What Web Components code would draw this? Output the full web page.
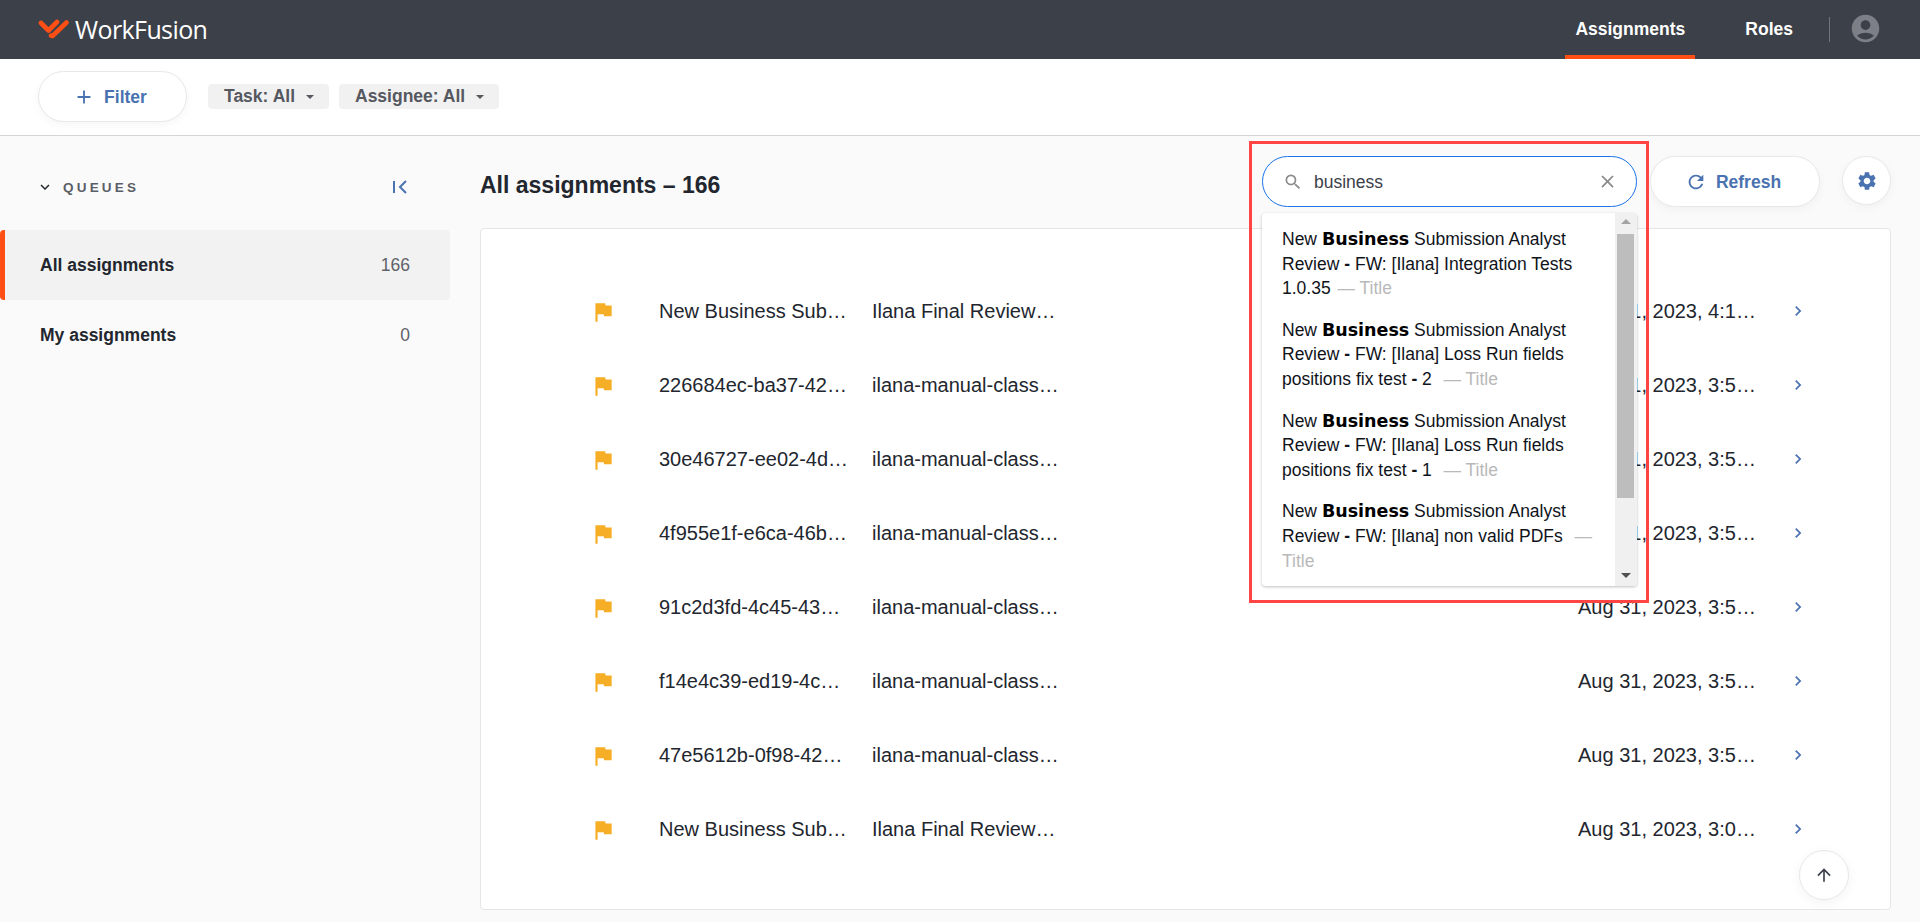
<!DOCTYPE html>
<html lang="en">
<head>
<meta charset="utf-8">
<title>WorkFusion</title>
<style>
    html, body { margin: 0; height: 100%; }
    body {
        display: flex;
        flex-direction: column;
        height: 922px;
        overflow: hidden;
        background: #fafafa;
        color: #22262e;
        font-family: "Liberation Sans", Arial, sans-serif;
    }
    .content { display: flex; flex: 1; min-height: 0; }
</style>
</head>
<body>
<wf-header></wf-header>
<wf-filter-bar></wf-filter-bar>
<div class="content">
    <wf-sidebar>
        <wf-queue-item label="All assignments" count="166" active></wf-queue-item>
        <wf-queue-item label="My assignments" count="0"></wf-queue-item>
    </wf-sidebar>
    <wf-main>
        <wf-row name="New Business Sub…" task="Ilana Final Review…" date="Aug 31, 2023, 4:1…"></wf-row>
        <wf-row name="226684ec-ba37-42…" task="ilana-manual-class…" date="Aug 31, 2023, 3:5…"></wf-row>
        <wf-row name="30e46727-ee02-4d…" task="ilana-manual-class…" date="Aug 31, 2023, 3:5…"></wf-row>
        <wf-row name="4f955e1f-e6ca-46b…" task="ilana-manual-class…" date="Aug 31, 2023, 3:5…"></wf-row>
        <wf-row name="91c2d3fd-4c45-43…" task="ilana-manual-class…" date="Aug 31, 2023, 3:5…"></wf-row>
        <wf-row name="f14e4c39-ed19-4c…" task="ilana-manual-class…" date="Aug 31, 2023, 3:5…"></wf-row>
        <wf-row name="47e5612b-0f98-42…" task="ilana-manual-class…" date="Aug 31, 2023, 3:5…"></wf-row>
        <wf-row name="New Business Sub…" task="Ilana Final Review…" date="Aug 31, 2023, 3:0…"></wf-row>
    </wf-main>
</div>

<script>
const ICONS = {
    search: 'M15.5 14h-.79l-.28-.27A6.471 6.471 0 0 0 16 9.5 6.5 6.5 0 1 0 9.5 16c1.61 0 3.09-.59 4.23-1.57l.27.28v.79l5 4.99L20.49 19l-4.99-5zm-6 0C7.01 14 5 11.99 5 9.5S7.01 5 9.5 5 14 7.01 14 9.5 11.99 14 9.5 14z',
    close: 'M19 6.41 17.59 5 12 10.59 6.41 5 5 6.41 10.59 12 5 17.59 6.41 19 12 13.41 17.59 19 19 17.59 13.41 12z',
    refresh: 'M17.65 6.35A7.958 7.958 0 0 0 12 4c-4.42 0-7.99 3.58-7.99 8s3.57 8 7.99 8c3.73 0 6.84-2.55 7.73-6h-2.08A5.99 5.99 0 0 1 12 18c-3.31 0-6-2.69-6-6s2.69-6 6-6c1.66 0 3.14.69 4.22 1.78L13 11h7V4l-2.35 2.35z',
    settings: 'M19.14 12.94c.04-.3.06-.61.06-.94 0-.32-.02-.64-.07-.94l2.03-1.58a.49.49 0 0 0 .12-.61l-1.92-3.32a.488.488 0 0 0-.59-.22l-2.39.96c-.5-.38-1.03-.7-1.62-.94l-.36-2.54a.484.484 0 0 0-.48-.41h-3.84c-.24 0-.43.17-.47.41l-.36 2.54c-.59.24-1.13.57-1.62.94l-2.39-.96c-.22-.08-.47 0-.59.22L2.74 8.87c-.12.21-.08.47.12.61l2.03 1.58c-.05.3-.09.63-.09.94s.02.64.07.94l-2.03 1.58a.49.49 0 0 0-.12.61l1.92 3.32c.12.22.37.29.59.22l2.39-.96c.5.38 1.03.7 1.62.94l.36 2.54c.05.24.24.41.48.41h3.84c.24 0 .44-.17.47-.41l.36-2.54c.59-.24 1.13-.56 1.62-.94l2.39.96c.22.08.47 0 .59-.22l1.92-3.32c.12-.22.07-.47-.12-.61l-2.01-1.58zM12 15.6c-1.98 0-3.6-1.62-3.6-3.6s1.62-3.6 3.6-3.6 3.6 1.62 3.6 3.6-1.62 3.6-3.6 3.6z',
    account: 'M12 2C6.48 2 2 6.48 2 12s4.48 10 10 10 10-4.48 10-10S17.52 2 12 2zm0 4c1.93 0 3.5 1.57 3.5 3.5S13.93 13 12 13s-3.5-1.57-3.5-3.5S10.07 6 12 6zm0 14c-2.03 0-4.43-.82-6.14-2.88C7.55 15.8 9.68 15 12 15s4.45.8 6.14 2.12C16.43 19.18 14.03 20 12 20z',
    up: 'M4 12l1.41 1.41L11 7.83V20h2V7.83l5.58 5.59L20 12l-8-8-8 8z',
    flag: 'M14.4 6 14 4H5v17h2v-7h5.6l.4 2h7V6z',
    add: 'M19 13h-6v6h-2v-6H5v-2h6V5h2v6h6v2z',
    chevron: 'M10 6 8.59 7.41 13.17 12l-4.58 4.59L10 18l6-6z',
    down: 'M16.59 8.59 12 13.17 7.41 8.59 6 10l6 6 6-6z'
};

function icon(name, size, color) {
    return `<svg width="${size}" height="${size}" viewBox="0 0 24 24" fill="${color}" style="display:block;flex:none"><path d="${ICONS[name]}"/></svg>`;
}

class WfElement extends HTMLElement {
    constructor() {
        super();
        this.attachShadow({mode: 'open'});
    }
    render(html) {
        this.shadowRoot.innerHTML = html;
    }
}

class WfHeader extends WfElement {
    connectedCallback() {
        this.render(`
        <style>
            :host {
                display: flex;
                align-items: stretch;
                flex: none;
                height: 59px;
                background: #3c4049;
                color: #fff;
                font: bold 17.5px "Liberation Sans", Arial, sans-serif;
            }
            .logo { display: flex; align-items: center; padding: 0 0 2px 38px; flex: 1; }
            .logo span { font: 400 25px "Open Sans", sans-serif; letter-spacing: -.6px; margin-left: 6px; }
            nav { display: flex; }
            a { display: flex; align-items: center; box-sizing: border-box; }
            a.on { width: 130px; justify-content: center; border-bottom: 4px solid #ff4f14; padding-top: 4px; margin-right: 50px; }
            .sep { width: 1px; height: 25px; background: #72757c; margin: 17px 19px 0 36px; }
            .me { margin: 12px 38px 0 0; }
        </style>
        <div class="logo">
            <svg width="31" height="20" viewBox="0 0 31 20" fill="none" stroke="#ff4f14" stroke-width="4.6" stroke-linecap="round" stroke-linejoin="round">
                <path d="M3 4 L10.5 11.5 L19 3"/><path d="M13 16.5 L14.5 17 L28.5 3.5"/>
            </svg>
            <span>WorkFusion</span>
        </div>
        <nav>
            <a class="on">Assignments</a>
            <a>Roles</a>
            <div class="sep"></div>
            <div class="me">${icon('account', 33, '#7c7f85')}</div>
        </nav>`);
    }
}

class WfChip extends WfElement {
    connectedCallback() {
        this.render(`
        <style>
            :host {
                display: inline-flex;
                align-items: center;
                height: 25px;
                padding: 0 15px 0 16px;
                gap: 11px;
                border-radius: 4px;
                background: #f1f1f2;
                color: #55585f;
                font: bold 17.5px "Liberation Sans", Arial, sans-serif;
            }
            i { width: 0; height: 0; border: 4px solid transparent; border-top: 4px solid #55585f; border-bottom: 0; }
        </style>
        <slot></slot><i></i>`);
    }
}

class WfPill extends WfElement {
    connectedCallback() {
        const name = this.getAttribute('icon'), size = this.getAttribute('size') || 22;
        this.render(`
        <style>
            :host {
                display: inline-flex;
                align-items: center;
                justify-content: center;
                flex: none;
                box-sizing: border-box;
                height: 51px;
                gap: 9px;
                border: 1px solid #e8e8e8;
                border-radius: 26px;
                background: #fff;
                box-shadow: 0 3px 10px rgba(0, 0, 0, .04);
                color: #4a72b0;
                font: bold 17.5px "Liberation Sans", Arial, sans-serif;
            }
        </style>
        ${icon(name, size, '#4a72b0')}<slot></slot>`);
    }
}

class WfFilterBar extends WfElement {
    connectedCallback() {
        this.render(`
        <style>
            :host {
                display: flex;
                align-items: center;
                flex: none;
                box-sizing: border-box;
                height: 77px;
                padding: 0 0 1px 38px;
                background: #fff;
                border-bottom: 1px solid #d5d5d5;
            }
            wf-pill { width: 149px; margin-right: 21px; padding: 1px 5px 0 0; }
            wf-chip { margin-right: 10px; }
        </style>
        <wf-pill icon="add">Filter</wf-pill>
        <wf-chip>Task: All</wf-chip>
        <wf-chip>Assignee: All</wf-chip>`);
    }
}

class WfSidebar extends WfElement {
    connectedCallback() {
        this.render(`
        <style>
            :host { display: block; flex: none; width: 450px; }
            .head {
                display: flex;
                align-items: center;
                box-sizing: border-box;
                height: 94px;
                padding: 8px 42px 0 36px;
            }
            .head span {
                flex: 1;
                margin-left: 9px;
                color: #5a5e66;
                font: bold 13.5px "Liberation Sans", Arial, sans-serif;
                letter-spacing: 3.2px;
            }
        </style>
        <div class="head">
            ${icon('down', 18, '#22262e')}
            <span>QUEUES</span>
            <svg width="16" height="16" viewBox="0 0 16 16" fill="none" stroke="#4a72b0" stroke-width="2"><path d="M2 2v12M14 2 8 8l6 6"/></svg>
        </div>
        <slot></slot>`);
    }
}

class WfQueueItem extends WfElement {
    connectedCallback() {
        this.render(`
        <style>
            :host {
                display: flex;
                align-items: center;
                box-sizing: border-box;
                height: 70px;
                padding: 0 40px;
                color: #22262e;
                font: bold 17.5px "Liberation Sans", Arial, sans-serif;
            }
            :host([active]) {
                background: #f2f2f2;
                border-left: 5px solid #ff4f14;
                border-radius: 4px;
                padding-left: 35px;
            }
            b { flex: 1; }
            span { color: #5f6269; font-weight: 400; }
        </style>
        <b>${this.getAttribute('label')}</b><span>${this.getAttribute('count')}</span>`);
    }
}

class WfSearch extends WfElement {
    connectedCallback() {
        const results = [
            ['Integration Tests', '1.0.35', ' '],
            ['Loss Run fields', 'positions fix test <b>-</b> 2', '&nbsp; '],
            ['Loss Run fields', 'positions fix test <b>-</b> 1', '&nbsp; '],
            ['non valid PDFs', '', '&nbsp; ']
        ];
        const items = results.map(([a, b, gap]) => `
            <li>New <em>Business</em> Submission Analyst<br>Review <b>-</b> FW: [Ilana] ${a}${b ? '<br>' + b : ''}${gap}<u>— ${b ? 'Title' : '<br>Title'}</u></li>`).join('');
        this.render(`
        <style>
            :host {
                display: block;
                flex: none;
                position: relative;
                width: 375px;
                height: 51px;
                margin-right: 13px;
                color: #22262e;
                font: 17.5px "Liberation Sans", Arial, sans-serif;
            }
            .box {
                display: flex;
                align-items: center;
                box-sizing: border-box;
                height: 51px;
                padding: 0 18px 0 20px;
                border: 1px solid #1a73e8;
                border-radius: 26px;
                background: #fff;
            }
            .box span { flex: 1; margin: 1px 0 0 11px; color: #3c4049; }
            .drop {
                display: flex;
                position: absolute;
                top: 57px;
                left: 0;
                right: 0;
                height: 373px;
                box-sizing: border-box;
                overflow: hidden;
                border-radius: 4px;
                background: #fff;
                box-shadow: 0 1px 3px rgba(0, 0, 0, .25);
            }
            ul { flex: 1; list-style: none; margin: 0; padding: 14px 0 0 20px; }
            li { line-height: 24.6px; margin-bottom: 17px; white-space: nowrap; color: #10131a; }
            em { font: bold 17.5px/1 "DejaVu Sans", sans-serif; color: #000; }
            u { margin-left: 2px; text-decoration: none; color: #b9b9b9; }
            .bar { position: relative; width: 22px; background: #f0f0f0; }
            .thumb { position: absolute; top: 21px; left: 2px; width: 17px; height: 264px; background: #bdbdbd; }
            .bar i { position: absolute; left: 6px; width: 0; height: 0; border: 5px solid transparent; }
            .bar .t { top: 6px; border-top: 0; border-bottom: 5px solid #a3a3a3; }
            .bar .d { bottom: 8px; border-bottom: 0; border-top: 5px solid #505050; }
            .mark {
                position: absolute;
                top: -15px;
                left: -13px;
                width: 400px;
                height: 462px;
                box-sizing: border-box;
                border: 3px solid #ff4444;
                pointer-events: none;
            }
        </style>
        <div class="box">
            ${icon('search', 20, '#8a8a8a')}
            <span>business</span>
            ${icon('close', 21, '#8a8a8a')}
        </div>
        <div class="drop">
            <ul>${items}</ul>
            <div class="bar"><i class="t"></i><div class="thumb"></div><i class="d"></i></div>
        </div>
        <div class="mark"></div>`);
    }
}

class WfMain extends WfElement {
    connectedCallback() {
        this.render(`
        <style>
            :host {
                display: flex;
                flex-direction: column;
                flex: 1;
                min-width: 0;
                padding: 20px 29px 12px 30px;
            }
            .top {
                display: flex;
                align-items: flex-start;
                position: relative;
                z-index: 2;
                height: 51px;
                margin-bottom: 21px;
            }
            h1 {
                flex: 1;
                align-self: center;
                margin: 8px 0 0;
                color: #22262e;
                font: bold 23px "Liberation Sans", Arial, sans-serif;
            }
            .refresh { width: 170px; margin-right: 22px; padding: 1px 4px 0 0; }
            .gear { width: 49px; height: 49px; }
            .card {
                flex: 1;
                box-sizing: border-box;
                padding-top: 45px;
                border: 1px solid #e6e6e6;
                border-radius: 4px;
                background: #fff;
                position: relative;
            }
            .totop {
                position: absolute;
                right: 41px;
                bottom: 9px;
                display: flex;
                align-items: center;
                justify-content: center;
                box-sizing: border-box;
                width: 50px;
                height: 50px;
                border: 1px solid #e8e8e8;
                border-radius: 50%;
                background: #fff;
                box-shadow: 0 3px 12px rgba(0, 0, 0, .05);
            }
        </style>
        <div class="top">
            <h1>All assignments – 166</h1>
            <wf-search></wf-search>
            <wf-pill class="refresh" icon="refresh">Refresh</wf-pill>
            <wf-pill class="gear" icon="settings"></wf-pill>
        </div>
        <div class="card">
            <slot></slot>
            <div class="totop">${icon('up', 20, '#3c4049')}</div>
        </div>`);
    }
}

class WfRow extends WfElement {
    connectedCallback() {
        this.render(`
        <style>
            :host {
                display: flex;
                align-items: center;
                height: 74px;
                padding-left: 109px;
                color: #22262e;
                font: 400 20px "Liberation Sans", Arial, sans-serif;
                white-space: nowrap;
            }
            .flag { width: 69px; padding-top: 2px; }
            .name { width: 213px; }
            .task { width: 706px; }
            .date { width: 210px; }
        </style>
        <div class="flag">${icon('flag', 26, '#f5ae25')}</div>
        <div class="name">${this.getAttribute('name')}</div>
        <div class="task">${this.getAttribute('task')}</div>
        <div class="date">${this.getAttribute('date')}</div>
        ${icon('chevron', 20, '#4a72b0')}`);
    }
}

customElements.define('wf-header', WfHeader);
customElements.define('wf-chip', WfChip);
customElements.define('wf-pill', WfPill);
customElements.define('wf-filter-bar', WfFilterBar);
customElements.define('wf-sidebar', WfSidebar);
customElements.define('wf-queue-item', WfQueueItem);
customElements.define('wf-search', WfSearch);
customElements.define('wf-main', WfMain);
customElements.define('wf-row', WfRow);
</script>
</body>
</html>
